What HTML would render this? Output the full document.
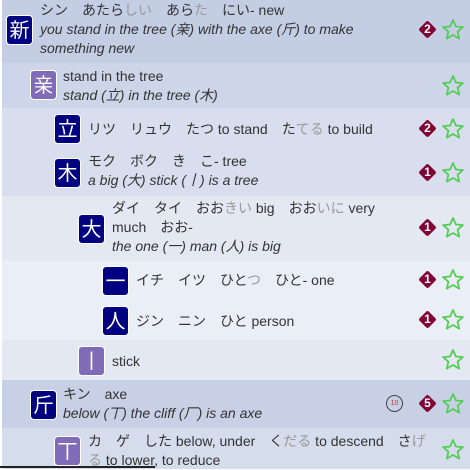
<!DOCTYPE html><html><head><meta charset="utf-8"><style>
body{margin:0;width:470px;height:469px;overflow:hidden;font-family:"Liberation Sans","Noto Sans CJK JP",sans-serif;font-size:14px;color:#333;position:relative;background:#fff}
.r{position:absolute;left:2px;right:0}
.k{position:absolute;width:27px;height:30px;border-radius:4px;background:#000080;color:#fff;font-size:20px;line-height:30px;text-align:center;border:1px solid #fff;box-sizing:border-box}
.p{background:#7f6bb8}
.t{position:absolute;line-height:19px;white-space:nowrap}
i{font-style:italic}
.g{color:#999}
.d{position:absolute;left:421px;width:13px;height:13px;background:#800033;transform:rotate(45deg);border-radius:2px}
.d span{display:block;transform:rotate(-45deg);color:#fff;font-size:12px;line-height:13px;text-align:center;font-weight:bold}
.s{position:absolute;left:441px}
</style></head><body>
<svg width="0" height="0" style="position:absolute"><defs><symbol id="st" viewBox="0 0 24 24"><path d="M12 2l2.9 6.5 7 .6-5.3 4.6 1.6 6.9L12 17l-6.2 3.6 1.6-6.9-5.3-4.6 7-.6z" fill="none" stroke="#55cc55" stroke-width="1.8" stroke-linejoin="round"/></symbol></defs></svg>

<div class="r" style="top:0;height:63px;background:#c3cde4"></div>
<div class="r" style="top:63px;height:45px;background:#cdd5e9"></div>
<div class="r" style="top:108px;height:88px;background:#d8deee"></div>
<div class="r" style="top:196px;height:65px;background:#e3e8f3"></div>
<div class="r" style="top:261px;height:79px;background:#eaeef6"></div>
<div class="r" style="top:340px;height:40px;background:#e3e8f3"></div>
<div class="r" style="top:380px;height:48px;background:#c8d0e6"></div>
<div class="r" style="top:428px;height:41px;background:#d5dcec"></div>
<div style="position:absolute;left:0;top:466px;width:155px;height:2px;background:#222"></div>

<div class="k" style="left:6px;top:15px">新</div>
<div class="t" style="left:40px;top:1px">シン　あたら<span class="g">しい</span>　あら<span class="g">た</span>　にい- new<br><i>you stand in the tree (亲) with the axe (斤) to make<br>something new</i></div>
<div class="d" style="top:23px"><span>2</span></div><svg class="s" style="top:18px" width="24" height="24"><use href="#st"/></svg>

<div class="k p" style="left:30px;top:70px">亲</div>
<div class="t" style="left:63px;top:67px">stand in the tree<br><i>stand (立) in the tree (木)</i></div>
<svg class="s" style="top:74px" width="24" height="24"><use href="#st"/></svg>

<div class="k" style="left:54px;top:114px">立</div>
<div class="t" style="left:88px;top:120px">リツ　リュウ　たつ to stand　た<span class="g">てる</span> to build</div>
<div class="d" style="top:122px"><span>2</span></div><svg class="s" style="top:117px" width="24" height="24"><use href="#st"/></svg>

<div class="k" style="left:54px;top:158px">木</div>
<div class="t" style="left:88px;top:152px">モク　ボク　き　こ- tree<br><i>a big (大) stick (丨) is a tree</i></div>
<div class="d" style="top:166px"><span>1</span></div><svg class="s" style="top:161px" width="24" height="24"><use href="#st"/></svg>

<div class="k" style="left:78px;top:214px">大</div>
<div class="t" style="left:112px;top:199px">ダイ　タイ　おお<span class="g">きい</span> big　おお<span class="g">いに</span> very<br>much　おお-<br><i>the one (一) man (人) is big</i></div>
<div class="d" style="top:221px"><span>1</span></div><svg class="s" style="top:216px" width="24" height="24"><use href="#st"/></svg>

<div class="k" style="left:102px;top:266px">一</div>
<div class="t" style="left:136px;top:271px">イチ　イツ　ひと<span class="g">つ</span>　ひと- one</div>
<div class="d" style="top:273px"><span>1</span></div><svg class="s" style="top:268px" width="24" height="24"><use href="#st"/></svg>

<div class="k" style="left:102px;top:306px">人</div>
<div class="t" style="left:136px;top:312px">ジン　ニン　ひと person</div>
<div class="d" style="top:313px"><span>1</span></div><svg class="s" style="top:308px" width="24" height="24"><use href="#st"/></svg>

<div class="k p" style="left:78px;top:346px">丨</div>
<div class="t" style="left:112px;top:352px">stick</div>
<svg class="s" style="top:348px" width="24" height="24"><use href="#st"/></svg>

<div class="k" style="left:30px;top:390px">斤</div>
<div class="t" style="left:63px;top:385px">キン　axe<br><i>below (丅) the cliff (厂) is an axe</i></div>
<div style="position:absolute;left:386px;top:395px;width:15px;height:15px;border:1px solid #444;border-radius:50%;font-size:7px;line-height:15px;text-align:center;color:#c33">10</div>
<div class="d" style="top:397px"><span>5</span></div><svg class="s" style="top:392px" width="24" height="24"><use href="#st"/></svg>

<div class="k p" style="left:54px;top:436px">丅</div>
<div class="t" style="left:88px;top:432px">カ　ゲ　した below, under　く<span class="g">だる</span> to descend　さ<span class="g">げ</span><br><span class="g">る</span> to lower, to reduce</div>
<svg class="s" style="top:438px" width="24" height="24"><use href="#st"/></svg>
</body></html>
